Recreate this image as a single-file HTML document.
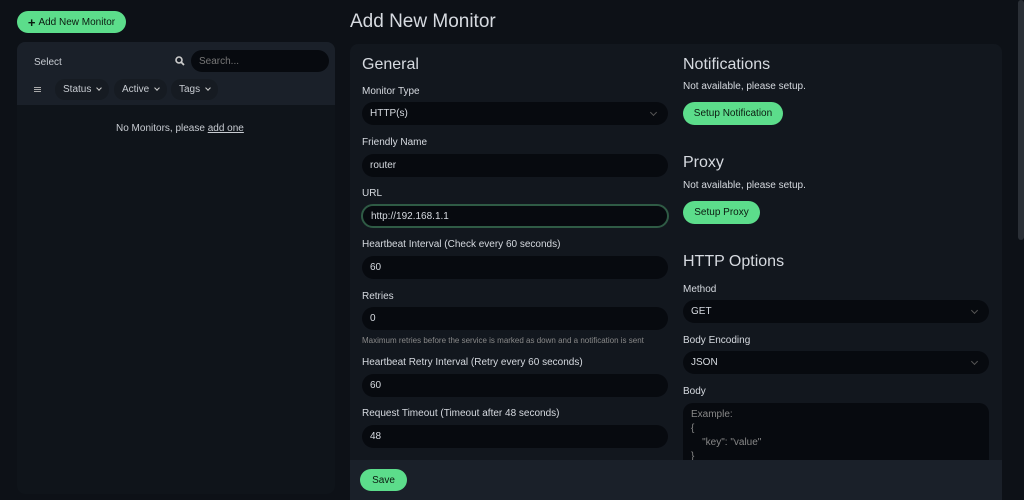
<!DOCTYPE html>
<html><head><meta charset="utf-8"><style>
*{box-sizing:border-box;margin:0;padding:0}
body{width:1024px;height:500px;overflow:hidden;background:#0d1117;font-family:"Liberation Sans",sans-serif;color:#d0d4da;font-size:10px;position:relative}
.abs{position:absolute}
.btn{position:absolute;background:#5cdd8b;color:#0b1a10;border-radius:12px;font-size:10px;display:flex;align-items:center;justify-content:center}
.lbl{position:absolute;font-size:10px;color:#d6dae0}
.inp{position:absolute;height:23px;background:#070a0f;border-radius:12px;padding-left:8px;display:flex;align-items:center;font-size:10px;color:#d6dae0}
.h{position:absolute;font-size:16px;color:#d6dae0}
.chev{position:absolute;right:12px;top:8px;width:5px;height:5px;border-right:1px solid #555;border-bottom:1px solid #555;transform:rotate(45deg)}
.pill{position:absolute;top:79px;height:21px;border-radius:10px;background:#161b22;display:flex;align-items:center;padding:0 8px;font-size:10px;color:#c8ccd2}
.pc{display:inline-block;width:4px;height:4px;border-right:1.5px solid #ccc;border-bottom:1.5px solid #ccc;transform:rotate(45deg);margin:-3px 0 0 6px}
</style></head><body>
<div class="btn" style="left:17px;top:11px;width:109px;height:22px"><b style="font-size:13px;margin-right:3px">+</b>Add New Monitor</div>
<div class="abs" style="left:17px;top:42px;width:318px;height:452px;background:#0f141a;border-radius:8px"></div>
<div class="abs" style="left:17px;top:42px;width:318px;height:63px;background:#1a2029;border-radius:8px 8px 0 0"></div>
<div class="abs" style="left:34px;top:57px;color:#c8ccd2">Select</div>
<svg class="abs" style="left:175px;top:56px" width="10" height="10" viewBox="0 0 10 10"><circle cx="4" cy="4" r="3" stroke="#ccc" stroke-width="1.6" fill="none"/><path d="M6.3 6.3L9 9" stroke="#ccc" stroke-width="1.8"/></svg>
<div class="inp" style="left:191px;top:50px;width:138px;height:22px;color:#777">Search...</div>
<div class="abs" style="left:34px;top:87px;width:7px;height:1px;background:#aaa;box-shadow:0 2px 0 #aaa,0 4px 0 #aaa"></div>
<div class="pill" style="left:55px">Status<span class="pc"></span></div>
<div class="pill" style="left:114px">Active<span class="pc"></span></div>
<div class="pill" style="left:171px">Tags<span class="pc"></span></div>
<div class="abs" style="left:116px;top:123px;color:#c8ccd2">No Monitors, please <u>add one</u></div>

<div class="abs" style="left:350px;top:11px;font-size:19px;color:#d6dae0">Add New Monitor</div>
<div class="abs" style="left:350px;top:44px;width:652px;height:456px;background:#12171e;border-radius:8px 8px 0 0"></div>
<div class="abs" style="left:1018px;top:0;width:6px;height:240px;background:#2a2f36;border-radius:3px"></div>

<div class="h" style="left:362px;top:56px">General</div>
<div class="lbl" style="left:362px;top:86px">Monitor Type</div>
<div class="inp" style="left:362px;top:102px;width:306px">HTTP(s)<div class="chev"></div></div>
<div class="lbl" style="left:362px;top:137px">Friendly Name</div>
<div class="inp" style="left:362px;top:154px;width:306px">router</div>
<div class="lbl" style="left:362px;top:188px">URL</div>
<div class="inp" style="left:361px;top:204px;width:308px;height:24px;border:2px solid #2f5b45">http://192.168.1.1</div>
<div class="lbl" style="left:362px;top:239px">Heartbeat Interval (Check every 60 seconds)</div>
<div class="inp" style="left:362px;top:256px;width:306px">60</div>
<div class="lbl" style="left:362px;top:291px">Retries</div>
<div class="inp" style="left:362px;top:307px;width:306px">0</div>
<div class="lbl" style="left:362px;top:336px;font-size:8px;color:#888">Maximum retries before the service is marked as down and a notification is sent</div>
<div class="lbl" style="left:362px;top:357px">Heartbeat Retry Interval (Retry every 60 seconds)</div>
<div class="inp" style="left:362px;top:374px;width:306px">60</div>
<div class="lbl" style="left:362px;top:408px">Request Timeout (Timeout after 48 seconds)</div>
<div class="inp" style="left:362px;top:425px;width:306px">48</div>

<div class="h" style="left:683px;top:56px">Notifications</div>
<div class="lbl" style="left:683px;top:81px">Not available, please setup.</div>
<div class="btn" style="left:683px;top:102px;width:100px;height:23px">Setup Notification</div>
<div class="h" style="left:683px;top:154px">Proxy</div>
<div class="lbl" style="left:683px;top:180px">Not available, please setup.</div>
<div class="btn" style="left:683px;top:201px;width:77px;height:23px">Setup Proxy</div>
<div class="h" style="left:683px;top:253px">HTTP Options</div>
<div class="lbl" style="left:683px;top:284px">Method</div>
<div class="inp" style="left:683px;top:300px;width:306px">GET<div class="chev"></div></div>
<div class="lbl" style="left:683px;top:335px">Body Encoding</div>
<div class="inp" style="left:683px;top:351px;width:306px">JSON<div class="chev"></div></div>
<div class="lbl" style="left:683px;top:386px">Body</div>
<div class="abs" style="left:683px;top:403px;width:306px;height:80px;background:#070a0f;border-radius:10px;padding:5px 8px;color:#888;font-size:10px;line-height:14px">Example:<br>{<br>&nbsp;&nbsp;&nbsp;&nbsp;"key": "value"<br>}</div>

<div class="abs" style="left:350px;top:460px;width:652px;height:40px;background:#1a2029"></div>
<div class="btn" style="left:360px;top:469px;width:47px;height:22px">Save</div>
</body></html>
